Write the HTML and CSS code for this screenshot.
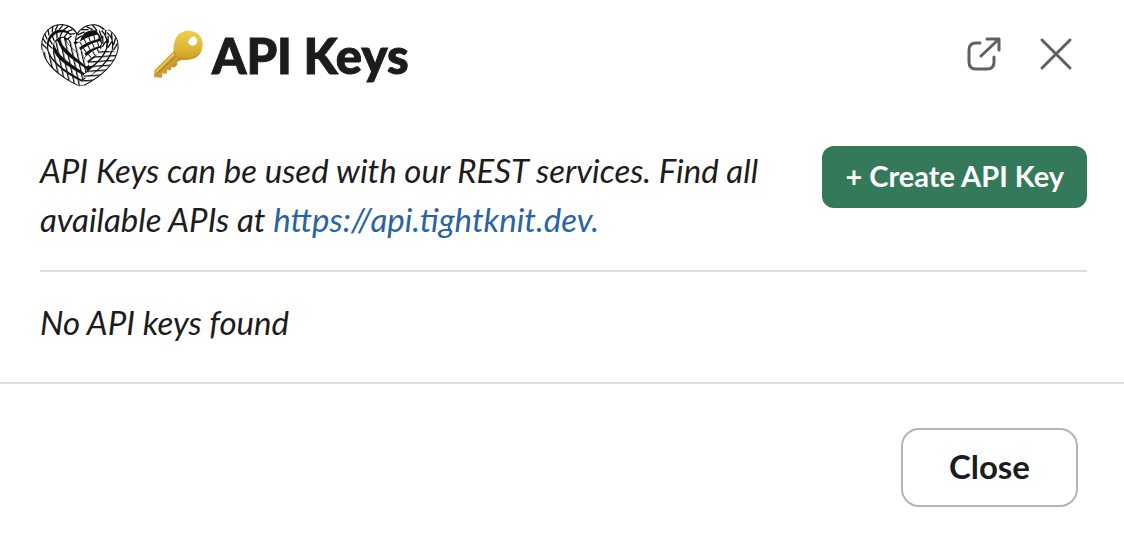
FILE: index.html
```html
<!DOCTYPE html>
<html lang="en">
<head>
    <meta charset="UTF-8">
    <meta name="viewport" content="width=device-width, initial-scale=1.0">
    <title>API Keys</title>
    <link rel="stylesheet" href="styles.css">
</head>
<body>
    <div class="modal" role="dialog" aria-labelledby="modalTitle">
        <header class="modal-header">
            <!-- Rope heart: each rope is a dark casing with a twisted light core -->
            <svg class="logo" viewBox="28 22 244 204" aria-hidden="true">
                <defs>
                    <pattern id="twistLeft" width="14" height="14" patternUnits="userSpaceOnUse" patternTransform="rotate(-12)">
                        <rect width="14" height="14" fill="#fff"/>
                        <rect width="4" height="14" fill="#111"/>
                    </pattern>
                    <pattern id="twistRight" width="14" height="14" patternUnits="userSpaceOnUse" patternTransform="rotate(-4)">
                        <rect width="14" height="14" fill="#fff"/>
                        <rect width="14" height="4" fill="#111"/>
                    </pattern>
                </defs>
                <path class="rope-base" d="M150 218C120 208 82 182 60 158C40 136 33 112 34 90C36 54 66 30 96 30C118 30 134 40 142 56C152 40 170 30 192 30C210 30 222 38 230 48C252 56 266 78 265 102C262 134 240 158 220 176C200 194 174 212 150 218Z"/>
                <!-- ropes inside the right loop -->
                <path class="rope" d="M144 94Q168 75 200 68M156 114Q178 96 208 88M172 133Q190 116 212 108"/>
                <path class="twist twist-dash" d="M144 94Q168 75 200 68M156 114Q178 96 208 88M172 133Q190 116 212 108"/>
                <!-- ropes from the left loop to the point -->
                <path class="rope twist-left" d="M43 106C48 138 88 180 150 209"/>
                <path class="rope twist-left" d="M59 104C72 140 108 164 156 190"/>
                <path class="rope twist-left" d="M77 86C88 122 124 142 164 170"/>
                <path class="rope twist-left" d="M96 76C108 104 140 122 170 149"/>
                <path class="rope twist-left" d="M116 78C126 94 142 104 160 124"/>
                <!-- ropes from the right loop to the point -->
                <path class="casing" d="M257 104C252 142 212 180 158 208M241 100C238 132 206 160 168 187M224 98C220 122 204 138 180 158"/>
                <path class="rope twist-right" d="M257 104C252 142 212 180 158 208M240 100C236 130 206 158 168 186M222 98C216 118 204 134 182 150"/>
                <!-- left loop -->
                <path class="casing" d="M60 108C54 80 76 58 98 60Q118 62 128 78M43 106C36 66 62 38 94 38Q124 40 135 68"/>
                <path class="rope" d="M61 108C56 80 76 59 98 60Q118 62 128 78M43 106C36 66 62 38 94 38Q124 40 135 68"/>
                <path class="twist" d="M34 88L49 103M36 72L48 88M42 57L50 75M52 44L56 63M67 35L65 54M83 30L74 48M99 30L86 46M114 35L99 47M127 45L109 52M135 57L118 59M52 90L66 103M56 74L66 90M65 62L71 79M79 53L80 71M96 51L89 67M112 55L101 69M124 64L111 75"/>
                <!-- right loop -->
                <path class="casing" d="M144 76C148 54 168 39 192 39Q208 40 218 54M207 48C222 64 228 80 222 104M232 53C252 64 260 84 257 106"/>
                <path class="rope" d="M144 76C148 54 168 39 192 39Q208 40 218 54M208 48C222 64 228 80 222 102M224 52C240 66 244 84 240 104M236 54C254 66 260 84 257 106"/>
                <path class="twist" d="M136 77L155 64M142 61L164 52M154 45L176 45M170 36L189 45M188 31L202 48M209 48L217 72M219 64L220 88M229 80L218 98M228 46L228 68M236 64L236 86M247 82L235 100M246 54L248 76M259 70L252 92M264 88L252 108M216 48C232 64 236 82 231 104M232 54C248 66 252 84 249 104"/>
            </svg>
            <h1 class="modal-title" id="modalTitle">
                <svg class="key-icon" viewBox="24 24 156 150" aria-hidden="true">
                    <defs>
                        <linearGradient id="bow" x1="0" y1="0" x2="0" y2="1">
                            <stop offset="0" stop-color="#ecd04c"/>
                            <stop offset="0.6" stop-color="#dfb635"/>
                            <stop offset="1" stop-color="#cb9c2b"/>
                        </linearGradient>
                        <linearGradient id="blade" x1="0" y1="0" x2="1" y2="1">
                            <stop offset="0.2" stop-color="#e6c449"/>
                            <stop offset="0.8" stop-color="#b98222"/>
                        </linearGradient>
                    </defs>
                    <path fill="url(#blade)" d="M87 86L28 145L27 166L50 167L53 154L65 155L66 143L77 145L79 136L89 136L97 128L96 120L114 112Z"/>
                    <path fill="none" stroke="#a36d1c" stroke-width="3" d="M32 159L94 101"/>
                    <path fill="none" stroke="#f5dc70" stroke-width="3" d="M32 151L88 95"/>
                    <path fill="url(#bow)" fill-rule="evenodd" d="M130 26C158 26 174 46 173 70C172 96 154 113 128 113C116 114 105 115 97 109C87 102 84 88 86 73C88 45 104 26 130 26ZM143 43A14 14 0 1 0 143 71A14 14 0 1 0 143 43Z"/>
                    <path fill="none" stroke="#c18f24" stroke-width="2" d="M130 56A14 14 0 0 1 143 43"/>
                    <path fill="none" stroke="#c18f24" stroke-width="3" d="M88 89C92 106 105 112 128 111C143 111 156 104 163 95"/>
                </svg>
                API Keys
            </h1>
            <div class="header-actions">
                <button class="icon-btn" type="button" aria-label="Open in new window">
                    <svg viewBox="0 0 36 36" aria-hidden="true">
                        <path d="M14 6H10Q3 6 3 13V25Q3 32 10 32H21Q28 32 28 25V20M15 19L33 2M21 2H33V13"/>
                    </svg>
                </button>
                <button class="icon-btn" type="button" aria-label="Dismiss">
                    <svg viewBox="0 0 36 36" aria-hidden="true">
                        <path d="M4 3L32 31M32 3L4 31"/>
                    </svg>
                </button>
            </div>
        </header>

        <main class="modal-body">
            <div class="section">
                <p class="text">API Keys can be used with our REST services. Find all available APIs at <a href="https://api.tightknit.dev">https://api.tightknit.dev.</a></p>
                <button class="create-btn" type="button">+ Create API Key</button>
            </div>
            <hr class="divider">
            <p class="text">No API keys found</p>
        </main>

        <footer class="modal-footer">
            <button class="close-btn" type="button">Close</button>
        </footer>
    </div>
</body>
</html>
```

FILE: styles.css
```css
* {
    margin: 0;
    padding: 0;
    box-sizing: border-box;
}

body {
    font-family: Lato, "Liberation Sans", sans-serif;
    font-size: 33px;
    line-height: 49px;
    color: #1d1c1d;
    background: #fff;
}

button {
    font-family: inherit;
    cursor: pointer;
}

.modal {
    width: 100%;
}

.modal-header {
    display: flex;
    align-items: center;
    height: 110px;
    padding: 0 50px 0 40px;
}

.logo {
    width: 80px;
    height: 67px;
    margin-right: 33px;
}

.rope-base {
    fill: #111;
}

.casing,
.rope,
.twist {
    fill: none;
    stroke: #111;
}

.casing {
    stroke-width: 20;
}

.rope {
    stroke: #fff;
    stroke-width: 14;
    stroke-linecap: round;
}

.twist-left {
    stroke: url(#twistLeft);
}

.twist-right {
    stroke: url(#twistRight);
}

.twist {
    stroke-width: 4;
}

.twist-dash {
    stroke-width: 14;
    stroke-dasharray: 3 12;
    stroke-dashoffset: 6;
}

.modal-title {
    display: flex;
    align-items: center;
    gap: 7px;
    font-size: 49px;
    font-weight: 900;
    line-height: 60px;
    -webkit-text-stroke: 1px #1d1c1d;
}

.key-icon {
    width: 52px;
    height: 50px;
}

.header-actions {
    display: flex;
    gap: 36px;
    margin-left: auto;
}

.icon-btn {
    width: 36px;
    height: 36px;
    border: none;
    background: none;
}

.icon-btn svg {
    display: block;
    overflow: visible;
    fill: none;
    stroke: #616061;
    stroke-width: 3;
    stroke-linecap: round;
    stroke-linejoin: round;
}

.modal-body {
    padding: 36px 37px 35px 40px;
}

.section {
    display: flex;
    align-items: flex-start;
    justify-content: space-between;
    gap: 50px;
}

.text {
    font-style: italic;
}

.text a {
    color: #2963a4;
    text-decoration: none;
}

.create-btn {
    flex-shrink: 0;
    height: 62px;
    padding: 0 23px 3px;
    border: none;
    border-radius: 12px;
    background: #35795b;
    color: #fff;
    font-size: 29px;
    font-weight: 700;
}

.divider {
    border: none;
    border-top: 2px solid #ddd;
    margin: 26px 0;
}

.modal-footer {
    display: flex;
    justify-content: flex-end;
    padding: 44px 46px 32px;
    border-top: 2px solid #ddd;
}

.close-btn {
    height: 79px;
    padding: 0 46px 3px;
    border: 2px solid #b5b5b5;
    border-radius: 18px;
    background: #fff;
    color: #1d1c1d;
    font-size: 33px;
    font-weight: 700;
}
```
